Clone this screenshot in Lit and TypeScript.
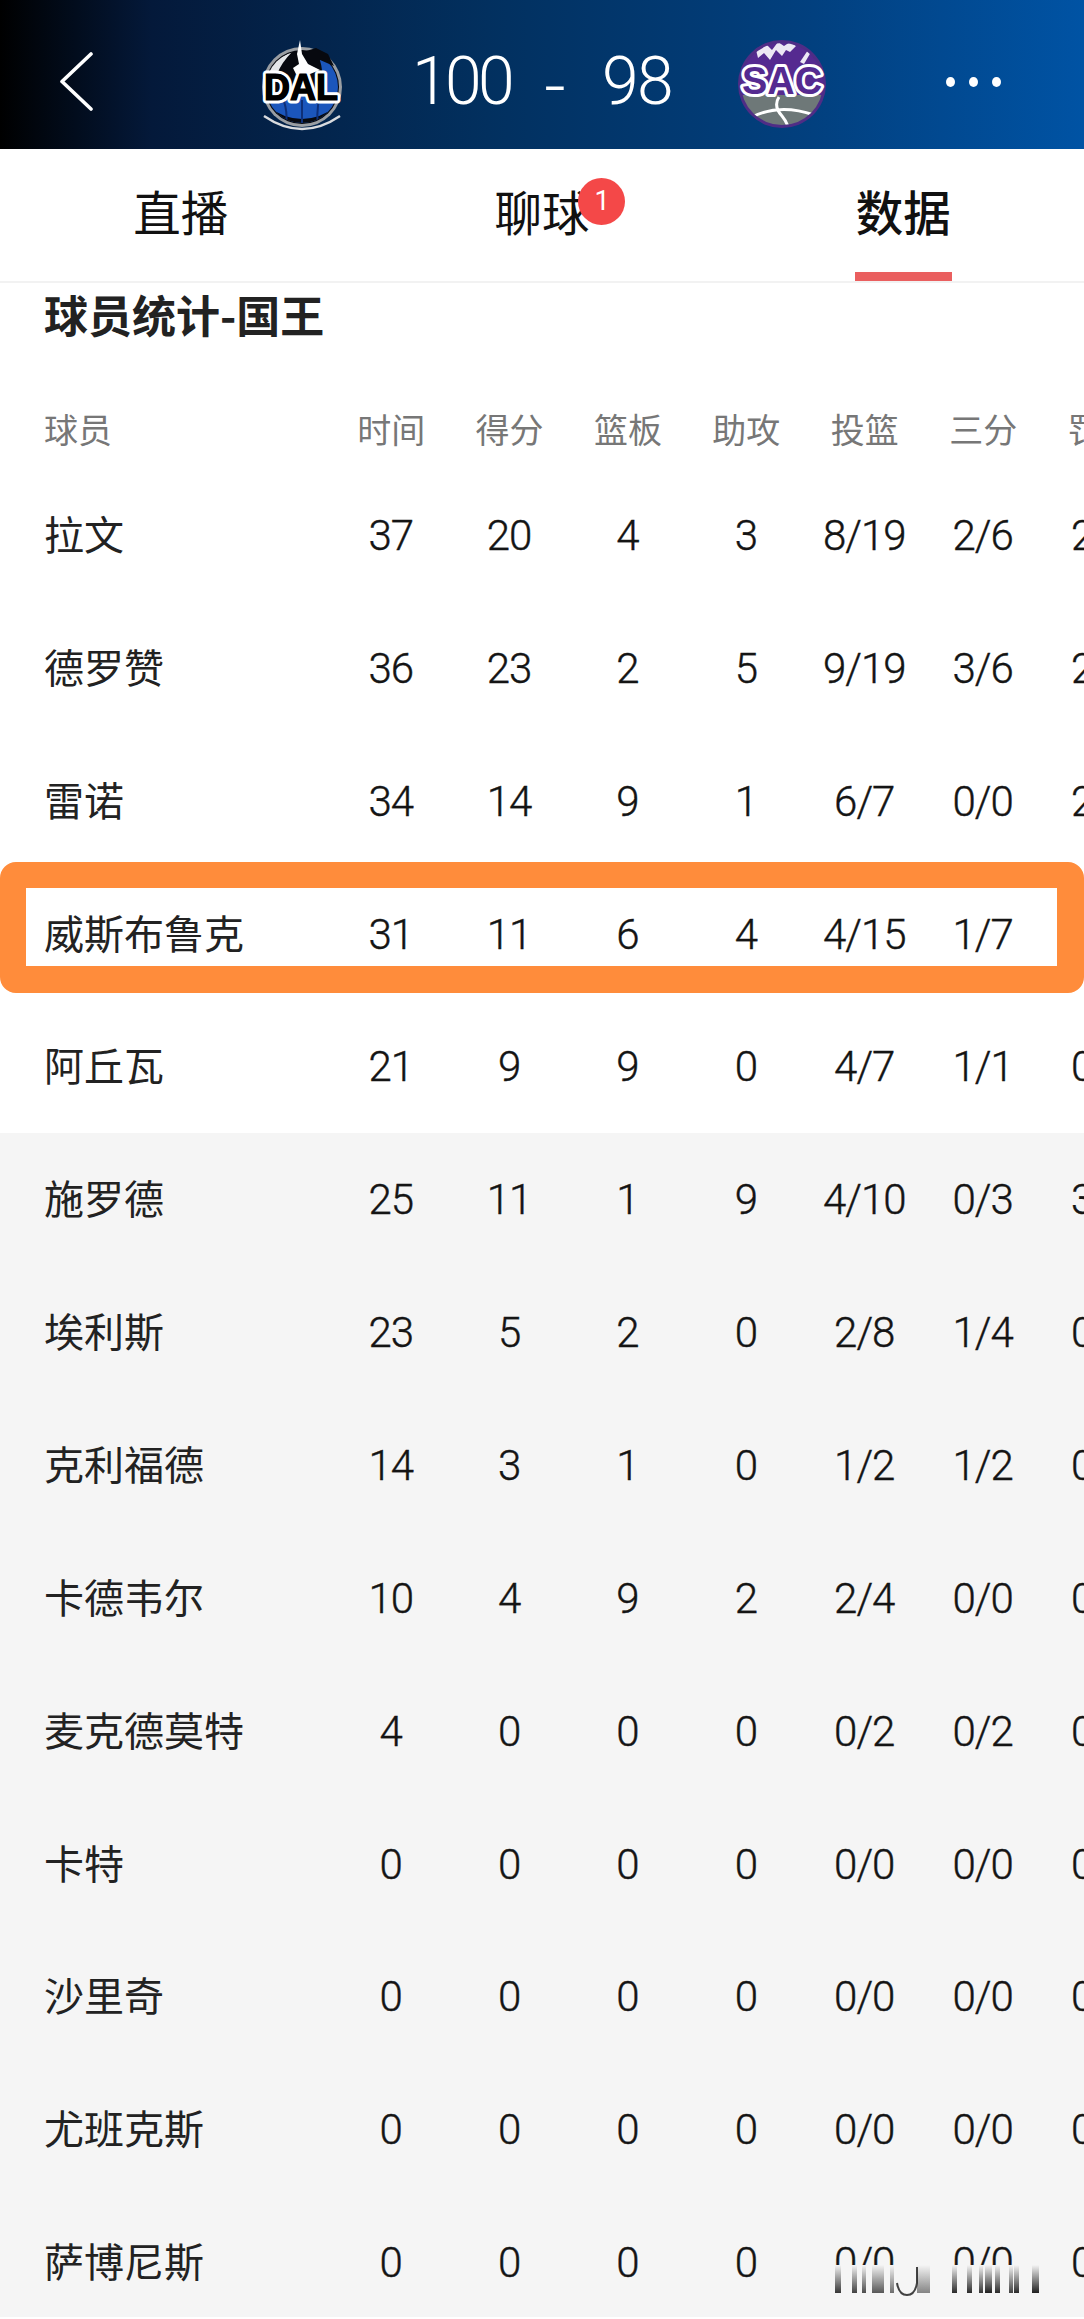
import { LitElement, html, css } from "lit";
import { customElement } from "lit/decorators.js";

const COLS = ["时间", "得分", "篮板", "助攻", "投篮", "三分", "罚球"];
const ROWS: string[][] = [
  ["拉文", "37", "20", "4", "3", "8/19", "2/6", "2/2"],
  ["德罗赞", "36", "23", "2", "5", "9/19", "3/6", "2/2"],
  ["雷诺", "34", "14", "9", "1", "6/7", "0/0", "2/2"],
  ["威斯布鲁克", "31", "11", "6", "4", "4/15", "1/7", "2/2"],
  ["阿丘瓦", "21", "9", "9", "0", "4/7", "1/1", "0/0"],
  ["施罗德", "25", "11", "1", "9", "4/10", "0/3", "3/3"],
  ["埃利斯", "23", "5", "2", "0", "2/8", "1/4", "0/0"],
  ["克利福德", "14", "3", "1", "0", "1/2", "1/2", "0/0"],
  ["卡德韦尔", "10", "4", "9", "2", "2/4", "0/0", "0/0"],
  ["麦克德莫特", "4", "0", "0", "0", "0/2", "0/2", "0/0"],
  ["卡特", "0", "0", "0", "0", "0/0", "0/0", "0/0"],
  ["沙里奇", "0", "0", "0", "0", "0/0", "0/0", "0/0"],
  ["尤班克斯", "0", "0", "0", "0", "0/0", "0/0", "0/0"],
  ["萨博尼斯", "0", "0", "0", "0", "0/0", "0/0", "0/0"],
];
// watermark streaks: [left, width, darkness], relative to the streak block
const STREAKS: [number, number, number][] = [
  [2, 6, 0.85], [19, 5, 0.8], [29, 4, 0.75], [39, 12, 0.7], [57, 4, 0.6],
  [84, 13, 0.5], [119, 5, 0.9], [134, 5, 0.9], [146, 4, 0.85], [152, 7, 0.95],
  [162, 5, 0.9], [176, 4, 0.8], [181, 5, 0.9], [199, 7, 0.95],
];

@customElement("app-root")
export class AppRoot extends LitElement {
  static styles = css`
    :host { display: block; width: 1084px; height: 2319px; overflow: hidden; position: relative; background: #fff;
      font-family: "Noto Sans CJK SC", "Noto Sans", sans-serif; color: #222; }
    .hero { height: 149px; display: grid; grid-template-columns: 252px 100px 1fr 100px 252px; align-items: center;
      background: linear-gradient(90deg, #000 0%, #04193a 14%, #02305f 45%, #02407f 75%, #0053a4 100%); color: #fff; }
    .back { padding-left: 58px; padding-top: 12px; display: flex; }
    .logo { display: block; width: 100px; height: 149px; }
    .score { display: flex; justify-content: center; align-items: center; gap: 37px; padding-top: 14px;
      font: 300 66px/1 Roboto, sans-serif; letter-spacing: -1.6px; }
    .home { letter-spacing: -3.6px; }
    .dash { font-size: 46px; transform: scaleX(1.6); font-weight: 400; padding-top: 8px; margin-right: 6px; }
    .more { display: flex; justify-content: flex-end; gap: 14px; padding: 15px 83px 0 0; }
    .more i { width: 9px; height: 10px; border-radius: 50%; background: #fff; }
    .tabs { display: grid; grid-template-columns: repeat(3, 1fr); border-bottom: 2px solid #f2f2f2; height: 132px; }
    .tab { display: flex; justify-content: center; align-items: center; font-size: 47.5px; color: #111; position: relative; padding-bottom: 10px; }
    .tab .t { position: relative; }
    .tab.on { font-weight: 500; }
    .tab.on .t::after { content: ""; position: absolute; left: -1px; right: -1px; bottom: -36px; height: 9px; background: #ea5f5f; }
    .badge { position: absolute; right: -36px; top: 2px; width: 47px; height: 47px; border-radius: 50%; background: #f44848;
      color: #fff; font: 400 27px/47px Roboto, sans-serif; text-align: center; }
    h2 { margin: 0; padding: 0 0 0 44px; height: 64px; font-size: 44px; line-height: 62px; font-weight: 700; color: #222; }
    .head, .row { display: grid; grid-template-columns: 288px repeat(7, 118.4px); padding-left: 44px; align-items: center; width: 1300px; }
    .head { box-sizing: border-box; height: 122px; padding-top: 40px; font-size: 34px; color: #777; }
    .head div:not(:first-child), .row div:not(:first-child) { text-align: center; }
    .row { height: 132.87px; font-size: 40px; color: #222; }
    .row div:first-child { padding-bottom: 5px; }
    .row div:not(:first-child) { font: 300 42px/1 Roboto, sans-serif; letter-spacing: -1px; color: #141414; padding: 1px 1px 0 0; -webkit-text-stroke: 0.4px #141414; }
    .row.sub { background: #f5f5f5; }
    .table { position: relative; overflow: hidden; height: 1970px; }
    .mark { position: absolute; left: 0; width: 1084px; top: 515px; height: 131px; box-sizing: border-box; border-style: solid; border-color: #ff8c3b;
      border-width: 26px 27px 27px 26px; border-radius: 16px; }
    .wm { position: absolute; left: 833px; top: 2265px; width: 230px; height: 28px; background: #f5f5f5; }
    .wm i { position: absolute; top: 0; height: 28px; }
    .wm svg { position: absolute; left: 60px; top: 0; }
  `;

  render() {
    return html`
      <section class="hero">
        <div class="back">
          <svg width="36" height="60" viewBox="0 0 36 60" fill="none"><path d="M33 3 4 30.5 33 58" stroke="#fff" stroke-width="3.6" stroke-linecap="round" stroke-linejoin="round"/></svg>
        </div>
        ${this.dal()}
        <div class="score"><span class="home">100</span><span class="dash">-</span><span>98</span></div>
        ${this.sac()}
        <div class="more"><i></i><i></i><i></i></div>
      </section>
      <nav class="tabs">
        <div class="tab"><span class="t">直播</span></div>
        <div class="tab"><span class="t">聊球<span class="badge">1</span></span></div>
        <div class="tab on"><span class="t">数据</span></div>
      </nav>
      <h2>球员统计-国王</h2>
      <div class="table">
        <div class="head"><div>球员</div>${COLS.map((c) => html`<div>${c}</div>`)}</div>
        ${ROWS.map((r, i) => html`<div class="row ${i >= 5 ? "sub" : ""}">${r.map((v) => html`<div>${v}</div>`)}</div>`)}
        <div class="mark"></div>
      </div>
      <div class="wm">
        ${STREAKS.map(([l, w, d]) => html`<i style="left:${l}px;width:${w}px;background:linear-gradient(180deg,rgba(20,20,20,0),rgba(20,20,20,${d}))"></i>`)}
        <svg width="30" height="36" viewBox="0 0 30 36" fill="none"><path d="M4 18Q6 30 14 30T24 18V2" stroke="#222" stroke-width="2" opacity=".85"/></svg>
      </div>
    `;
  }

  dal() {
    return html`<svg class="logo" viewBox="252 0 100 149">
      <defs><clipPath id="dc"><circle cx="302" cy="87" r="36"/></clipPath></defs>
      <circle cx="302" cy="87" r="40" fill="#9a9ea3"/>
      <circle cx="302" cy="87" r="37" fill="#07090f"/>
      <g clip-path="url(#dc)">
        <path d="M262 92H342V128H262Z" fill="#1b56bc"/>
        <path d="M316 50C330 60 340 74 340 92H322C324 76 322 62 316 50Z" fill="#1b56bc"/>
        <path d="M264 104Q302 134 340 104L340 116Q302 138 264 116Z" fill="#07090f"/>
        <path d="M282 96Q288 110 286 124M302 100V124M320 96Q316 110 318 124" stroke="#0e2f78" stroke-width="2" fill="none"/>
        <path d="M267 74Q274 58 292 52Q282 62 277 74Z" fill="#e4e6e9"/>
      </g>
      <path d="M264 116Q302 142 340 116" stroke="#d9dbde" stroke-width="2.4" fill="none"/>
      <path d="M300 40 302 54 308 64 320 70 310 74 296 74 293 68 299 64 297 54Z" fill="#fff"/>
      <path d="M303 52 316 48 328 54 334 66 320 60 310 60Z" fill="#07090f"/>
      <text x="301" y="100" text-anchor="middle" font-family="Liberation Sans, sans-serif" font-weight="700" font-size="36" textLength="74" lengthAdjust="spacingAndGlyphs" fill="#000" stroke="#fff" stroke-width="7" paint-order="stroke" stroke-linejoin="round">DAL</text>
      <text x="301" y="100" text-anchor="middle" font-family="Liberation Sans, sans-serif" font-weight="700" font-size="36" textLength="74" lengthAdjust="spacingAndGlyphs" fill="#000" stroke="#000" stroke-width="1.2" aria-hidden="true">DAL</text>
    </svg>`;
  }

  sac() {
    return html`<svg class="logo" viewBox="732 0 100 149">
      <defs><clipPath id="sc"><circle cx="782" cy="84" r="41"/></clipPath></defs>
      <circle cx="782" cy="84" r="44" fill="#4f2d86"/>
      <g clip-path="url(#sc)">
        <rect x="740" y="40" width="84" height="55" fill="#552a90"/>
        <rect x="740" y="95" width="84" height="36" fill="#6e7878"/>
        <path d="M756 50 766 44 772 50 778 42 784 46 790 42 796 46 790 52 786 50 782 56 776 50 770 60 764 53 758 58Z" fill="#ece8f4"/>
        <path d="M800 62 808 50 811 52 804 64Z" fill="#ece8f4"/>
        <path d="M752 117Q780 103 814 115" fill="none" stroke="#fff" stroke-width="3"/>
        <path d="M779 97Q773 106 782 116Q787 122 789 130" fill="none" stroke="#fff" stroke-width="3"/>
      </g>
      <text x="782" y="94" text-anchor="middle" font-family="Liberation Sans, sans-serif" font-weight="700" font-size="38" textLength="80" lengthAdjust="spacingAndGlyphs" fill="#552a90" stroke="#fff" stroke-width="6" paint-order="stroke" stroke-linejoin="round">SAC</text>
    </svg>`;
  }
}
